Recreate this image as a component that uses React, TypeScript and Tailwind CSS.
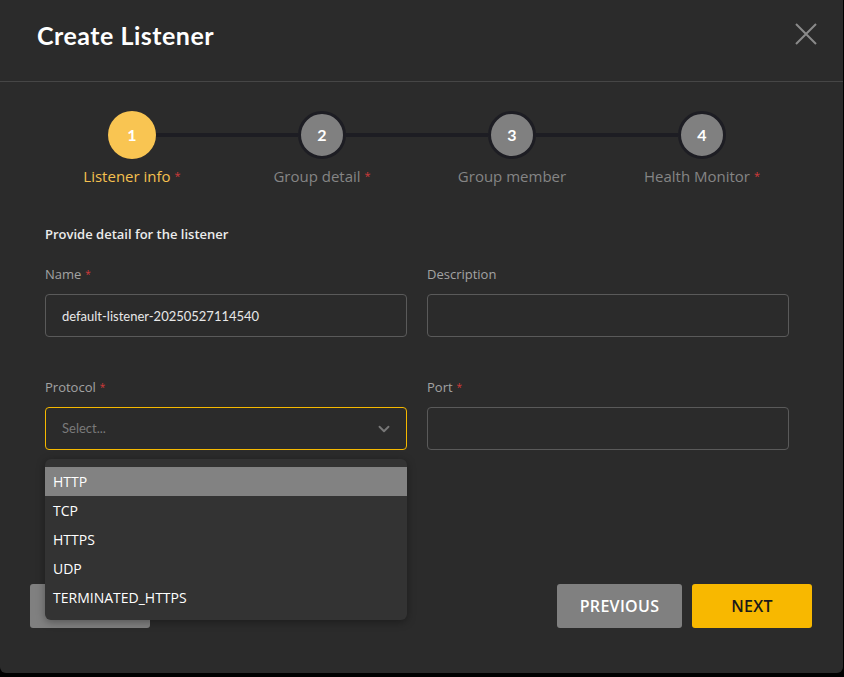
import { ChevronDown } from 'lucide-react';

const steps = [
  { n: 1, label: 'Listener info', required: true, active: true },
  { n: 2, label: 'Group detail', required: true, active: false },
  { n: 3, label: 'Group member', required: false, active: false },
  { n: 4, label: 'Health Monitor', required: true, active: false },
];

const protocols = ['HTTP', 'TCP', 'HTTPS', 'UDP', 'TERMINATED_HTTPS'];

function Stepper() {
  return (
    <div className="ml-[37px] mt-[29px] grid w-[760px] grid-cols-4">
      {steps.map((s, i) => (
        <div key={s.n} className="flex flex-col items-center">
          <div className="flex w-full items-center">
            <div className={`h-[4px] flex-1 ${i === 0 ? 'bg-transparent' : 'bg-[#1d1d23]'}`} />
            {s.active ? (
              <div className="flex h-[48px] w-[48px] items-center justify-center rounded-full bg-[#f9c552] text-[16px] font-bold text-white">
                {s.n}
              </div>
            ) : (
              <div className="flex h-[48px] w-[48px] items-center justify-center rounded-full border-[3px] border-[#1d1d23] bg-[#808080] text-[16px] font-bold text-white">
                {s.n}
              </div>
            )}
            <div className={`h-[4px] flex-1 ${i === steps.length - 1 ? 'bg-transparent' : 'bg-[#1d1d23]'}`} />
          </div>
          <div
            className={`mt-[6px] font-['Open_Sans',sans-serif] text-[15px] leading-[22px] ${s.active ? 'text-[#f5c04f]' : 'text-[#858585]'}`}
          >
            {s.label}
            {s.required && <span className="ml-1 text-[11px] align-top text-[#d33a3a]">*</span>}
          </div>
        </div>
      ))}
    </div>
  );
}

function Label({ text, required }: { text: string; required?: boolean }) {
  return (
    <div className="font-['Open_Sans',sans-serif] text-[13px] leading-[20px] text-[#a3a3a3]">
      {text}
      {required && <span className="ml-1 text-[10px] align-top text-[#d33a3a]">*</span>}
    </div>
  );
}

export default function App() {
  return (
    <div className="h-[677px] w-[844px] bg-black font-['Lato',sans-serif]">
      <div className="relative h-[673px] w-[843px] rounded-b-md bg-[#2b2b2b]">
        {/* Header */}
        <div className="flex h-[82px] items-start justify-between border-b border-[#464646] pl-[37px] pr-[26px] pt-[20px]">
          <h1 className="text-[25px] font-bold leading-[30px] tracking-[0.5px] text-white">Create Listener</h1>
          <button className="mt-[3px] text-[#8a8a8a]" aria-label="Close">
            <svg width="22" height="22" viewBox="0 0 22 22" fill="none" stroke="currentColor" strokeWidth="2">
              <path d="M1 1l20 20M21 1L1 21" />
            </svg>
          </button>
        </div>

        <Stepper />

        {/* Form */}
        <div className="px-[45px] pr-[54px]">
          <div className="mt-[37px] font-['Open_Sans',sans-serif] text-[13px] font-semibold leading-[20px] text-[#ececec]">
            Provide detail for the listener
          </div>

          <div className="mt-[20px] grid grid-cols-2 gap-x-[20px]">
            <div>
              <Label text="Name" required />
              <input
                defaultValue="default-listener-20250527114540"
                className="mt-[10px] h-[43px] w-full rounded-[4px] border border-[#5a5a5a] bg-transparent px-4 text-[13px] text-[#e8e8e8] outline-none"
              />
            </div>
            <div>
              <Label text="Description" />
              <input className="mt-[10px] h-[43px] w-full rounded-[4px] border border-[#5a5a5a] bg-transparent px-4 text-[13px] text-[#e8e8e8] outline-none" />
            </div>

            <div className="mt-[40px]">
              <Label text="Protocol" required />
              <div className="relative mt-[10px]">
                <div className="flex h-[43px] w-full items-center justify-between rounded-[4px] border border-[#f5b800] px-4 text-[13px] text-[#7a7a7a]">
                  <span>Select...</span>
                  <ChevronDown size={18} strokeWidth={2.5} className="mr-[-3px] text-[#777]" />
                </div>
                {/* Dropdown menu */}
                <div className="absolute left-0 right-0 top-[calc(100%+9px)] z-10 rounded-md bg-[#333333] py-2 font-['Open_Sans',sans-serif] shadow-[0_2px_8px_rgba(0,0,0,0.35)]">
                  {protocols.map((p, i) => (
                    <div
                      key={p}
                      className={`flex h-[29px] items-center px-2 text-[14px] font-medium text-white ${i === 0 ? 'bg-[#828282]' : ''}`}
                    >
                      {p}
                    </div>
                  ))}
                </div>
              </div>
            </div>
            <div className="mt-[40px]">
              <Label text="Port" required />
              <input className="mt-[10px] h-[43px] w-full rounded-[4px] border border-[#5a5a5a] bg-transparent px-4 text-[13px] text-[#e8e8e8] outline-none" />
            </div>
          </div>
        </div>

        {/* Footer buttons */}
        <div className="mt-[134px] flex items-center justify-between pl-[30px] pr-[31px]">
          <button className="h-[44px] w-[120px] rounded-[3px] bg-[#808080] text-[14px] font-semibold text-white">
            CANCEL
          </button>
          <div className="flex gap-[10px]">
            <button className="h-[44px] w-[125px] rounded-[3px] bg-[#808080] font-['Open_Sans',sans-serif] text-[16px] font-semibold tracking-[0.3px] text-white">
              PREVIOUS
            </button>
            <button className="h-[44px] w-[120px] rounded-[3px] bg-[#f8b800] font-['Open_Sans',sans-serif] text-[16px] font-semibold tracking-[0.3px] text-[#1a1a1a]">
              NEXT
            </button>
          </div>
        </div>
      </div>
    </div>
  );
}
